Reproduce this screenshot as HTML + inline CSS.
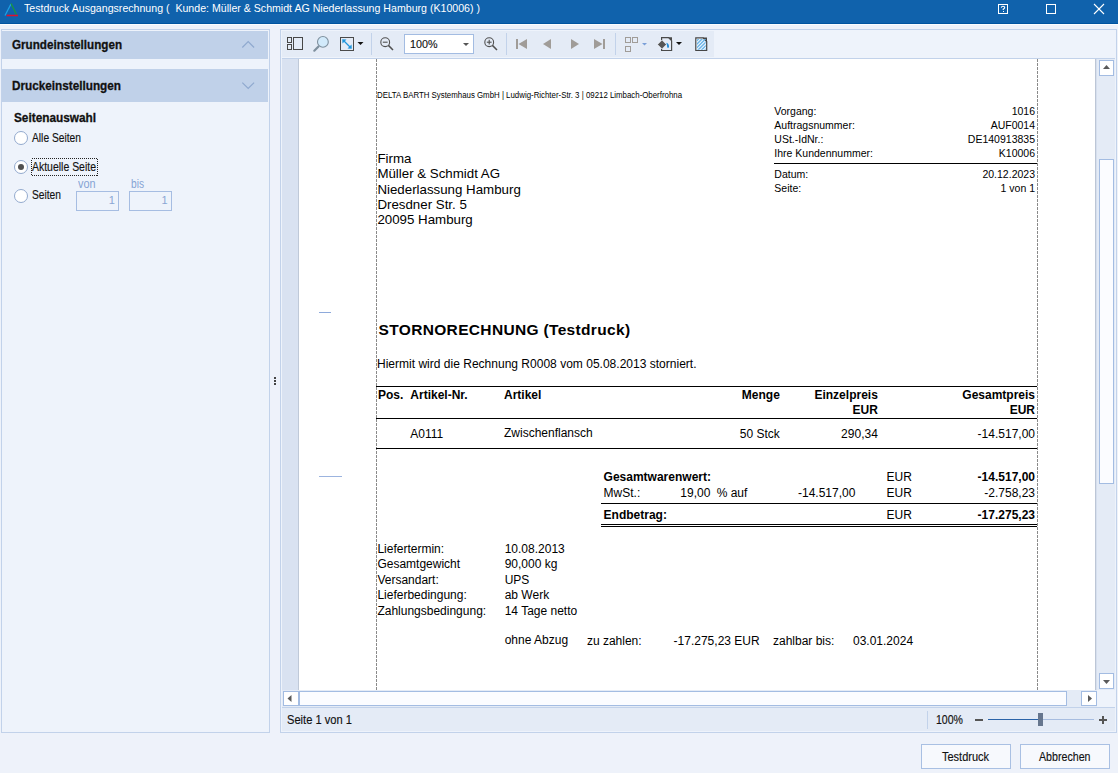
<!DOCTYPE html>
<html><head><meta charset="utf-8"><style>
html,body{margin:0;padding:0;}
body{width:1118px;height:773px;position:relative;overflow:hidden;background:#eef2fa;font-family:"Liberation Sans", sans-serif;}
.t{position:absolute;white-space:pre;line-height:1;}
svg{position:absolute;left:0;top:0;}
</style></head><body>
<svg width="1118" height="773" viewBox="0 0 1118 773" shape-rendering="crispEdges">
<!-- title bar -->
<rect x="0" y="0" width="1118" height="23" fill="#1062ac"/>
<rect x="0" y="23" width="1118" height="1" fill="#0054a0"/>
<rect x="0" y="24" width="1118" height="1" fill="#fbfdff"/>
<g shape-rendering="geometricPrecision">
<line x1="5" y1="15.5" x2="11" y2="4" stroke="#1aa0e6" stroke-width="1.3"/>
<line x1="11" y1="3.5" x2="16.5" y2="14.5" stroke="#1a9a3a" stroke-width="1.3"/>
<line x1="6.5" y1="15.5" x2="18" y2="15.5" stroke="#e0102a" stroke-width="1.5"/>
</g>
<!-- title icons -->
<rect x="998.5" y="4.5" width="9" height="9" fill="none" stroke="#fff" stroke-width="1"/>
<g shape-rendering="geometricPrecision" fill="none" stroke="#fff" stroke-width="1.1">
<path d="M1001.3 7.6 Q1001.5 6.2 1003 6.2 Q1004.7 6.2 1004.7 7.6 Q1004.7 8.6 1003.2 9.2 L1003.2 10"/>
</g>
<rect x="1002.6" y="11" width="1.2" height="1.2" fill="#fff"/>
<rect x="1046.5" y="4.5" width="9" height="9" fill="none" stroke="#fff" stroke-width="1"/>
<g shape-rendering="geometricPrecision" stroke="#fff" stroke-width="1.1">
<line x1="1094" y1="4" x2="1104" y2="14"/>
<line x1="1104" y1="4" x2="1094" y2="14"/>
</g>

<!-- left panel -->
<rect x="1.5" y="29.5" width="268" height="703" fill="#eef3fb" stroke="#c2d2ea" stroke-width="1"/>
<rect x="2" y="31" width="266" height="28" fill="#c0d1e9"/>
<rect x="2" y="69" width="266" height="33" fill="#c0d1e9"/>
<g shape-rendering="geometricPrecision" fill="none" stroke="#8fa9cf" stroke-width="1.2">
<polyline points="242.3,47.5 248.2,41.6 254.1,47.5"/>
<polyline points="242.3,82.6 248.2,88.5 254.1,82.6"/>
</g>
<!-- radios -->
<g shape-rendering="geometricPrecision">
<circle cx="21" cy="138" r="6.5" fill="#fff" stroke="#93aace" stroke-width="1"/>
<circle cx="21" cy="167" r="6.5" fill="#fff" stroke="#93aace" stroke-width="1"/>
<circle cx="21" cy="167" r="3" fill="#505050"/>
<circle cx="21" cy="196" r="6.5" fill="#fff" stroke="#93aace" stroke-width="1"/>
</g>
<rect x="31.5" y="158.5" width="66" height="17" fill="none" stroke="#222" stroke-width="1" stroke-dasharray="1 1"/>
<rect x="76.5" y="191.5" width="42" height="19" fill="#eef3fb" stroke="#a6bde2" stroke-width="1"/>
<rect x="129.5" y="191.5" width="42" height="19" fill="#eef3fb" stroke="#a6bde2" stroke-width="1"/>

<!-- splitter -->
<rect x="274" y="377" width="2" height="2" fill="#444"/>
<rect x="274" y="380" width="2" height="2" fill="#444"/>
<rect x="274" y="383" width="2" height="2" fill="#444"/>

<!-- right panel -->
<rect x="280.5" y="29.5" width="836" height="703" fill="#eef3fb" stroke="#c2d2ea" stroke-width="1"/>
<rect x="282" y="31" width="432" height="26" fill="#e4ebf6"/>
<rect x="282" y="58" width="833" height="1" fill="#c2d2ea"/>
<!-- doc area -->
<rect x="282" y="59" width="16" height="631" fill="#d9e2f1"/>
<rect x="298" y="59" width="1" height="631" fill="#bfc9d8"/>
<rect x="299" y="59" width="796" height="631" fill="#ffffff"/>
<rect x="1095" y="59" width="1" height="631" fill="#bcc6d6"/>
<rect x="1096" y="59" width="1" height="631" fill="#d6dfee"/>
<rect x="1097" y="59" width="18" height="631" fill="#e4ebf6"/>
<!-- v scrollbar -->
<rect x="1099.5" y="60.5" width="14" height="15" fill="#fff" stroke="#a3bce2" stroke-width="1"/>
<rect x="1099.5" y="159.5" width="14" height="324" fill="#fbfcff" stroke="#a3bce2" stroke-width="1"/>
<rect x="1099.5" y="673.5" width="14" height="15" fill="#fff" stroke="#a3bce2" stroke-width="1"/>
<g shape-rendering="geometricPrecision" fill="#5a5a5a">
<polygon points="1103,69 1110,69 1106.5,65"/>
<polygon points="1103,680 1110,680 1106.5,684"/>
</g>
<!-- h scrollbar -->
<rect x="282" y="690" width="833" height="17" fill="#e4ebf6"/>
<rect x="1097" y="690" width="18" height="17" fill="#eef3fb"/>
<rect x="283.5" y="691.5" width="15" height="14" fill="#fff" stroke="#a3bce2" stroke-width="1"/>
<rect x="299.5" y="691.5" width="767" height="14" fill="#fbfcff" stroke="#a3bce2" stroke-width="1"/>
<rect x="1081.5" y="691.5" width="15" height="14" fill="#fff" stroke="#a3bce2" stroke-width="1"/>
<g shape-rendering="geometricPrecision" fill="#5a5a5a">
<polygon points="291.5,695 291.5,702 287.5,698.5"/>
<polygon points="1088,695 1088,702 1092,698.5"/>
</g>
<rect x="282" y="707" width="833" height="1" fill="#c2d2ea"/>
<!-- status bar -->
<rect x="282" y="708" width="833" height="23" fill="#e4ebf6"/>
<rect x="927" y="711" width="1" height="18" fill="#c2d2ea"/>
<rect x="975" y="719" width="8" height="2" fill="#555"/>
<rect x="988" y="718.5" width="51" height="1.6" fill="#2a63a8"/>
<rect x="1042" y="719" width="52" height="1" fill="#a7bde0"/>
<rect x="1038" y="713" width="5" height="13" fill="#66768e"/>
<rect x="1099" y="719" width="8" height="2" fill="#555"/>
<rect x="1102" y="716" width="2" height="8" fill="#555"/>

<!-- buttons -->
<rect x="921.5" y="744.5" width="89" height="24" fill="#f7f9fd" stroke="#a9c0e3" stroke-width="1"/>
<rect x="1020.5" y="744.5" width="89" height="24" fill="#f7f9fd" stroke="#a9c0e3" stroke-width="1"/>

<!-- toolbar icons -->
<g fill="none" stroke="#474747" stroke-width="1">
<rect x="287.5" y="37.5" width="4" height="5"/>
<rect x="287.5" y="44.5" width="4" height="5"/>
<rect x="293.5" y="37.5" width="9" height="12"/>
</g>
<g shape-rendering="geometricPrecision">
<line x1="314.3" y1="50.7" x2="318.5" y2="46.5" stroke="#7f909e" stroke-width="2.2" stroke-linecap="round"/>
<circle cx="322.9" cy="41.9" r="5.4" fill="#d2eafb" stroke="#7f909e" stroke-width="1.1"/>
</g>
<rect x="340.5" y="37.5" width="13" height="13" fill="none" stroke="#4a4a4a" stroke-width="1.2"/>
<g shape-rendering="geometricPrecision" stroke="#2096dc" stroke-width="1.3" fill="#2096dc">
<line x1="344" y1="41" x2="350" y2="47"/>
<polygon points="342.2,39.3 346.5,39.6 342.5,43.6" stroke="none"/>
<polygon points="351.8,48.7 347.5,48.4 351.5,44.4" stroke="none"/>
</g>
<polygon points="357.5,42 363.5,42 360.5,45" fill="#111" shape-rendering="geometricPrecision"/>
<rect x="371" y="33" width="1" height="22" fill="#c2d2ea"/>
<g shape-rendering="geometricPrecision" fill="none" stroke="#505050" stroke-width="1.1">
<circle cx="385.2" cy="42.2" r="4.4"/>
<line x1="382.8" y1="42.2" x2="387.6" y2="42.2"/>
<line x1="388.4" y1="45.4" x2="393" y2="50" stroke-width="1.5"/>
<circle cx="489.2" cy="42.2" r="4.4"/>
<line x1="486.8" y1="42.2" x2="491.6" y2="42.2"/>
<line x1="489.2" y1="39.8" x2="489.2" y2="44.6"/>
<line x1="492.4" y1="45.4" x2="497" y2="50" stroke-width="1.5"/>
</g>
<rect x="404.5" y="34.5" width="69" height="19" fill="#fff" stroke="#a3bce2" stroke-width="1"/>
<polygon points="463,43 469,43 466,46" fill="#555" shape-rendering="geometricPrecision"/>
<rect x="506" y="33" width="1" height="22" fill="#c2d2ea"/>
<g fill="#a09c98" shape-rendering="geometricPrecision">
<rect x="516" y="39" width="2" height="10"/>
<polygon points="518.5,44 527,39 527,49"/>
<polygon points="543,44 551,39 551,49"/>
<polygon points="579,44 571,39 571,49"/>
<polygon points="602.5,44 594,39 594,49"/>
<rect x="603" y="39" width="2" height="10"/>
</g>
<rect x="615" y="33" width="1" height="22" fill="#c2d2ea"/>
<g fill="none" stroke="#a09c98" stroke-width="1">
<rect x="625.5" y="37.5" width="5" height="5"/>
<rect x="632.5" y="37.5" width="5" height="5"/>
<rect x="625.5" y="46.5" width="5" height="5"/>
</g>
<polygon points="642,43 647,43 644.5,45.5" fill="#7a9fd8" shape-rendering="geometricPrecision"/>
<g shape-rendering="geometricPrecision">
<path d="M661.6 40.3 V37.6 H668.5 L671.6 40.7 V50.5 H661.6 V48.8" fill="none" stroke="#4a4a4a" stroke-width="1.2"/>
<polygon points="668,37.2 672,37.2 672,41.2" fill="#4a4a4a"/>
<polygon points="657.6,44.5 662,40.1 666.4,44.5 662,48.9" fill="#565656" stroke="#f4f7fc" stroke-width="0.6"/>
<path d="M666.3 42.8 Q669 43.6 669 46.6 Q669 48 668 48 Q667.1 48 667.1 46.6 Q667.1 44.8 666.3 42.8 Z" fill="#1e8ad6"/>
<polygon points="676,42 682,42 679,45" fill="#111"/>
<path d="M695.8 37.8 H703 L706.7 41.5 V50.5 H695.8 Z" fill="#f4f8fd" stroke="#454545" stroke-width="1.2"/>
<polygon points="702.5,37.5 707,37.5 707,42" fill="#454545"/>
</g>
<clipPath id="wm"><rect x="697" y="39" width="8.7" height="10.8"/></clipPath>
<g shape-rendering="geometricPrecision" stroke="#6ab4e8" stroke-width="1.5" clip-path="url(#wm)">
<line x1="696.5" y1="41.0" x2="699.0" y2="38.5"/>
<line x1="696.5" y1="44.5" x2="702.5" y2="38.5"/>
<line x1="696.5" y1="48.0" x2="706.0" y2="38.5"/>
<line x1="696.5" y1="51.5" x2="709.5" y2="38.5"/>
<line x1="696.5" y1="55.0" x2="713.0" y2="38.5"/>
<line x1="696.5" y1="58.5" x2="716.5" y2="38.5"/>
</g>

<!-- document decorations -->
<line x1="376.5" y1="59" x2="376.5" y2="690" stroke="#8a8a8a" stroke-width="1" stroke-dasharray="3 1"/>
<line x1="1037.5" y1="59" x2="1037.5" y2="690" stroke="#8a8a8a" stroke-width="1" stroke-dasharray="3 1"/>
<rect x="319" y="312" width="12" height="1" fill="#8eaadb"/>
<rect x="319" y="476" width="23" height="1" fill="#9cb4df"/>
<rect x="774" y="163" width="263" height="1" fill="#000"/>
<rect x="376" y="386" width="661" height="1" fill="#000"/>
<rect x="376" y="418" width="661" height="1" fill="#000"/>
<rect x="376" y="448" width="661" height="1" fill="#000"/>
<rect x="601" y="503" width="436" height="1" fill="#000"/>
<rect x="601" y="524" width="436" height="1" fill="#000"/>
<rect x="601" y="526" width="436" height="1" fill="#000"/>
</svg>

<span id="t0" class="t" style="top:3.47px;font-size:11.5px;color:#fff;left:24.00px;transform:scaleX(0.9216);transform-origin:left top;">Testdruck Ausgangsrechnung (  Kunde: Müller &amp; Schmidt AG Niederlassung Hamburg (K10006) )</span>
<span id="t1" class="t" style="top:38.62px;font-size:12.5px;color:#111;font-weight:bold;-webkit-text-stroke:0.3px #111;left:12.00px;transform:scaleX(0.9317);transform-origin:left top;">Grundeinstellungen</span>
<span id="t2" class="t" style="top:79.82px;font-size:12.5px;color:#111;font-weight:bold;-webkit-text-stroke:0.3px #111;left:12.00px;transform:scaleX(0.9397);transform-origin:left top;">Druckeinstellungen</span>
<span id="t3" class="t" style="top:111.62px;font-size:12.5px;color:#111;font-weight:bold;-webkit-text-stroke:0.3px #111;left:14.00px;transform:scaleX(0.9442);transform-origin:left top;">Seitenauswahl</span>
<span id="t4" class="t" style="top:131.84px;font-size:12px;color:#111;-webkit-text-stroke:0.15px #111;left:32.00px;transform:scaleX(0.8540);transform-origin:left top;">Alle Seiten</span>
<span id="t5" class="t" style="top:160.84px;font-size:12px;color:#111;-webkit-text-stroke:0.15px #111;left:32.00px;transform:scaleX(0.8720);transform-origin:left top;">Aktuelle Seite</span>
<span id="t6" class="t" style="top:189.24px;font-size:12px;color:#111;-webkit-text-stroke:0.15px #111;left:32.00px;transform:scaleX(0.8522);transform-origin:left top;">Seiten</span>
<span id="t7" class="t" style="top:177.64px;font-size:12px;color:#86a3d4;left:78.00px;transform:scaleX(0.9040);transform-origin:left top;">von</span>
<span id="t8" class="t" style="top:177.64px;font-size:12px;color:#86a3d4;left:130.50px;transform:scaleX(0.8473);transform-origin:left top;">bis</span>
<span id="t9" class="t" style="top:195.39px;font-size:11px;color:#8aa6d4;right:1003.20px;">1</span>
<span id="t10" class="t" style="top:195.39px;font-size:11px;color:#8aa6d4;right:950.40px;">1</span>
<span id="t11" class="t" style="top:38.67px;font-size:11.5px;color:#111;-webkit-text-stroke:0.15px #111;left:410.00px;transform:scaleX(0.9347);transform-origin:left top;">100%</span>
<span id="t12" class="t" style="top:713.64px;font-size:12px;color:#111;-webkit-text-stroke:0.15px #111;left:287.00px;transform:scaleX(0.9277);transform-origin:left top;">Seite 1 von 1</span>
<span id="t13" class="t" style="top:713.64px;font-size:12px;color:#111;-webkit-text-stroke:0.15px #111;left:935.50px;transform:scaleX(0.8794);transform-origin:left top;">100%</span>
<span id="t14" class="t" style="top:750.54px;font-size:12px;color:#111;-webkit-text-stroke:0.15px #111;left:941.60px;transform:scaleX(0.9151);transform-origin:left top;">Testdruck</span>
<span id="t15" class="t" style="top:750.54px;font-size:12px;color:#111;-webkit-text-stroke:0.15px #111;left:1038.70px;transform:scaleX(0.8872);transform-origin:left top;">Abbrechen</span>
<span id="t16" class="t" style="top:90.80px;font-size:8.5px;color:#000;left:377.40px;transform:scaleX(0.9245);transform-origin:left top;">DELTA BARTH Systemhaus GmbH | Ludwig-Richter-Str. 3 | 09212 Limbach-Oberfrohna</span>
<span id="t17" class="t" style="top:106.01px;font-size:10.5px;color:#000;left:774.30px;">Vorgang:</span>
<span id="t18" class="t" style="top:106.01px;font-size:10.5px;color:#000;right:83.00px;">1016</span>
<span id="t19" class="t" style="top:119.81px;font-size:10.5px;color:#000;left:774.30px;">Auftragsnummer:</span>
<span id="t20" class="t" style="top:119.81px;font-size:10.5px;color:#000;right:83.00px;">AUF0014</span>
<span id="t21" class="t" style="top:133.81px;font-size:10.5px;color:#000;left:774.30px;">USt.-IdNr.:</span>
<span id="t22" class="t" style="top:133.81px;font-size:10.5px;color:#000;right:83.00px;">DE140913835</span>
<span id="t23" class="t" style="top:148.01px;font-size:10.5px;color:#000;left:774.30px;">Ihre Kundennummer:</span>
<span id="t24" class="t" style="top:148.01px;font-size:10.5px;color:#000;right:83.00px;">K10006</span>
<span id="t25" class="t" style="top:168.71px;font-size:10.5px;color:#000;left:774.30px;">Datum:</span>
<span id="t26" class="t" style="top:168.71px;font-size:10.5px;color:#000;right:83.00px;">20.12.2023</span>
<span id="t27" class="t" style="top:182.91px;font-size:10.5px;color:#000;left:774.30px;">Seite:</span>
<span id="t28" class="t" style="top:182.91px;font-size:10.5px;color:#000;right:83.00px;">1 von 1</span>
<span id="t29" class="t" style="top:152.34px;font-size:13.3px;color:#000;left:377.40px;">Firma</span>
<span id="t30" class="t" style="top:167.34px;font-size:13.3px;color:#000;left:377.40px;">Müller &amp; Schmidt AG</span>
<span id="t31" class="t" style="top:183.14px;font-size:13.3px;color:#000;left:377.40px;">Niederlassung Hamburg</span>
<span id="t32" class="t" style="top:198.14px;font-size:13.3px;color:#000;left:377.40px;">Dresdner Str. 5</span>
<span id="t33" class="t" style="top:213.14px;font-size:13.3px;color:#000;left:377.40px;">20095 Hamburg</span>
<span id="t34" class="t" style="top:322.48px;font-size:15.5px;color:#000;font-weight:bold;letter-spacing:0.334px;left:378.60px;">STORNORECHNUNG (Testdruck)</span>
<span id="t35" class="t" style="top:357.84px;font-size:12px;color:#000;left:377.40px;transform:scaleX(1.0021);transform-origin:left top;">Hiermit wird die Rechnung R0008 vom 05.08.2013 storniert.</span>
<span id="t36" class="t" style="top:389.14px;font-size:12px;color:#000;font-weight:bold;left:378.00px;">Pos.</span>
<span id="t37" class="t" style="top:389.14px;font-size:12px;color:#000;font-weight:bold;left:410.30px;">Artikel-Nr.</span>
<span id="t38" class="t" style="top:389.14px;font-size:12px;color:#000;font-weight:bold;left:504.00px;">Artikel</span>
<span id="t39" class="t" style="top:389.14px;font-size:12px;color:#000;font-weight:bold;right:338.20px;">Menge</span>
<span id="t40" class="t" style="top:389.14px;font-size:12px;color:#000;font-weight:bold;right:240.20px;">Einzelpreis</span>
<span id="t41" class="t" style="top:404.24px;font-size:12px;color:#000;font-weight:bold;right:240.20px;">EUR</span>
<span id="t42" class="t" style="top:389.14px;font-size:12px;color:#000;font-weight:bold;right:83.00px;">Gesamtpreis</span>
<span id="t43" class="t" style="top:404.24px;font-size:12px;color:#000;font-weight:bold;right:83.00px;">EUR</span>
<span id="t44" class="t" style="top:427.84px;font-size:12px;color:#000;left:410.30px;">A0111</span>
<span id="t45" class="t" style="top:426.74px;font-size:12px;color:#000;left:504.00px;">Zwischenflansch</span>
<span id="t46" class="t" style="top:428.34px;font-size:12px;color:#000;right:338.20px;">50 Stck</span>
<span id="t47" class="t" style="top:428.34px;font-size:12px;color:#000;right:240.20px;">290,34</span>
<span id="t48" class="t" style="top:428.34px;font-size:12px;color:#000;right:83.00px;">-14.517,00</span>
<span id="t49" class="t" style="top:470.74px;font-size:12px;color:#000;font-weight:bold;left:603.60px;">Gesamtwarenwert:</span>
<span id="t50" class="t" style="top:470.64px;font-size:12px;color:#000;left:886.60px;">EUR</span>
<span id="t51" class="t" style="top:470.64px;font-size:12px;color:#000;font-weight:bold;right:83.00px;">-14.517,00</span>
<span id="t52" class="t" style="top:486.84px;font-size:12px;color:#000;left:603.60px;">MwSt.:</span>
<span id="t53" class="t" style="top:486.84px;font-size:12px;color:#000;right:407.70px;">19,00</span>
<span id="t54" class="t" style="top:486.84px;font-size:12px;color:#000;left:716.70px;">% auf</span>
<span id="t55" class="t" style="top:486.84px;font-size:12px;color:#000;right:262.60px;">-14.517,00</span>
<span id="t56" class="t" style="top:486.54px;font-size:12px;color:#000;left:886.60px;">EUR</span>
<span id="t57" class="t" style="top:486.54px;font-size:12px;color:#000;right:83.00px;">-2.758,23</span>
<span id="t58" class="t" style="top:509.24px;font-size:12px;color:#000;font-weight:bold;left:603.60px;">Endbetrag:</span>
<span id="t59" class="t" style="top:509.24px;font-size:12px;color:#000;left:886.60px;">EUR</span>
<span id="t60" class="t" style="top:509.24px;font-size:12px;color:#000;font-weight:bold;right:83.00px;">-17.275,23</span>
<span id="t61" class="t" style="top:542.94px;font-size:12px;color:#000;left:377.40px;">Liefertermin:</span>
<span id="t62" class="t" style="top:542.94px;font-size:12px;color:#000;left:504.70px;">10.08.2013</span>
<span id="t63" class="t" style="top:557.74px;font-size:12px;color:#000;left:377.40px;">Gesamtgewicht</span>
<span id="t64" class="t" style="top:557.74px;font-size:12px;color:#000;left:504.70px;">90,000 kg</span>
<span id="t65" class="t" style="top:573.84px;font-size:12px;color:#000;left:377.40px;">Versandart:</span>
<span id="t66" class="t" style="top:573.84px;font-size:12px;color:#000;left:504.70px;">UPS</span>
<span id="t67" class="t" style="top:588.64px;font-size:12px;color:#000;left:377.40px;">Lieferbedingung:</span>
<span id="t68" class="t" style="top:588.64px;font-size:12px;color:#000;left:504.70px;">ab Werk</span>
<span id="t69" class="t" style="top:605.04px;font-size:12px;color:#000;left:377.40px;">Zahlungsbedingung:</span>
<span id="t70" class="t" style="top:605.04px;font-size:12px;color:#000;left:504.70px;">14 Tage netto</span>
<span id="t71" class="t" style="top:634.04px;font-size:12px;color:#000;left:504.70px;">ohne Abzug</span>
<span id="t72" class="t" style="top:635.34px;font-size:12px;color:#000;left:586.90px;">zu zahlen:</span>
<span id="t73" class="t" style="top:635.34px;font-size:12px;color:#000;left:673.60px;">-17.275,23 EUR</span>
<span id="t74" class="t" style="top:635.34px;font-size:12px;color:#000;left:773.00px;">zahlbar bis:</span>
<span id="t75" class="t" style="top:635.34px;font-size:12px;color:#000;left:853.00px;">03.01.2024</span>
</body></html>
